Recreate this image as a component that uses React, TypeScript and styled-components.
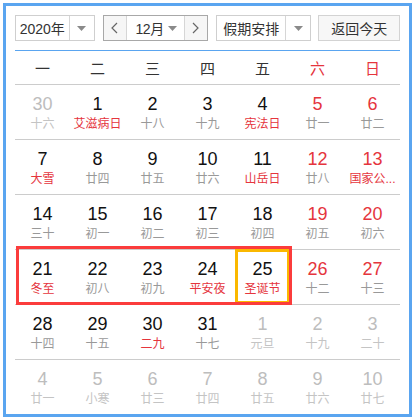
import styled, { createGlobalStyle } from "styled-components";

const GlobalStyle = createGlobalStyle`
  body {
    margin: 0;
    background: #fff;
    font-family: "Liberation Sans", "Noto Sans CJK SC", sans-serif;
  }
`;

type Day = {
  num: number;
  lunar: string;
  other?: boolean;
  festival?: boolean;
  weekend?: boolean;
  selected?: boolean;
};

const raw: [number, string, string?][][] = [
  [[30, "十六", "o"], [1, "艾滋病日", "f"], [2, "十八"], [3, "十九"], [4, "宪法日", "f"], [5, "廿一"], [6, "廿二"]],
  [[7, "大雪", "f"], [8, "廿四"], [9, "廿五"], [10, "廿六"], [11, "山岳日", "f"], [12, "廿八"], [13, "国家公...", "f"]],
  [[14, "三十"], [15, "初一"], [16, "初二"], [17, "初三"], [18, "初四"], [19, "初五"], [20, "初六"]],
  [[21, "冬至", "f"], [22, "初八"], [23, "初九"], [24, "平安夜", "f"], [25, "圣诞节", "fs"], [26, "十二"], [27, "十三"]],
  [[28, "十四"], [29, "十五"], [30, "二九", "f"], [31, "十七"], [1, "元旦", "o"], [2, "十九", "o"], [3, "二十", "o"]],
  [[4, "廿一", "o"], [5, "小寒", "o"], [6, "廿三", "o"], [7, "廿四", "o"], [8, "廿五", "o"], [9, "廿六", "o"], [10, "廿七", "o"]],
];

const weeks: Day[][] = raw.map((row) =>
  row.map(([num, lunar, flag = ""], i) => ({
    num,
    lunar,
    other: flag.includes("o"),
    festival: flag.includes("f"),
    selected: flag.includes("s"),
    weekend: i >= 5,
  }))
);

const weekdays = ["一", "二", "三", "四", "五", "六", "日"];

const Caret = () => (
  <svg width="9" height="5" viewBox="0 0 9 5">
    <path d="M0 0h9L4.5 5z" fill="#8a8a8a" />
  </svg>
);

const Chevron = ({ dir }: { dir: "left" | "right" }) => (
  <svg width="7" height="12" viewBox="0 0 7 12">
    <path
      d={dir === "left" ? "M6 1L1 6l5 5" : "M1 1l5 5-5 5"}
      fill="none"
      stroke="#666"
      strokeWidth="1.2"
    />
  </svg>
);

const App = (): JSX.Element => {
  return (
    <>
      <GlobalStyle />
      <Frame>
        <Toolbar>
          <Select $width={80}>
            <span className="label">2020年</span>
            <span className="arrow">
              <Caret />
            </span>
          </Select>
          <MonthGroup>
            <NavButton>
              <Chevron dir="left" />
            </NavButton>
            <MonthSelect>
              <span>12月</span>
              <Caret />
            </MonthSelect>
            <NavButton>
              <Chevron dir="right" />
            </NavButton>
          </MonthGroup>
          <Select $width={96}>
            <span className="label">假期安排</span>
            <span className="arrow">
              <Caret />
            </span>
          </Select>
          <TodayButton>返回今天</TodayButton>
        </Toolbar>

        <WeekHeader>
          {weekdays.map((w, i) => (
            <HeaderCell key={w} $weekend={i >= 5}>
              {w}
            </HeaderCell>
          ))}
        </WeekHeader>

        {weeks.map((week, wi) => (
          <WeekRow key={wi}>
            {wi === 3 && <WeekHighlight />}
            {week.map((d, di) => (
              <DayCell key={di} $selected={d.selected}>
                <DayNum $other={d.other} $weekend={d.weekend}>
                  {d.num}
                </DayNum>
                <Lunar $other={d.other} $festival={d.festival}>
                  {d.lunar}
                </Lunar>
              </DayCell>
            ))}
          </WeekRow>
        ))}
      </Frame>
    </>
  );
};

export default App;

const Frame = styled.div`
  margin: 3px;
  width: 409px;
  height: 414px;
  box-sizing: border-box;
  border: 3px solid #5aa5f0;
  padding: 9px 9px 0;
  background: #fff;
  overflow: hidden;
`;

const Toolbar = styled.div`
  display: flex;
  align-items: center;
  gap: 8px;
  height: 26px;
  font-size: 14px;
  color: #333;
  white-space: nowrap;
`;

const Select = styled.div<{ $width: number }>`
  width: ${(p) => p.$width}px;
  height: 26px;
  box-sizing: border-box;
  border: 1px solid #cfcfcf;
  display: flex;
  background: #fff;

  .label {
    flex: 1;
    display: flex;
    align-items: center;
    justify-content: center;
  }
  .arrow {
    width: 24px;
    border-left: 1px solid #d6d6d6;
    display: flex;
    align-items: center;
    justify-content: center;
  }
`;

const MonthGroup = styled.div`
  width: 106px;
  height: 26px;
  box-sizing: border-box;
  border: 1px solid #a8a8a8;
  display: flex;
`;

const NavButton = styled.div`
  width: 22px;
  background: #f6f6f6;
  display: flex;
  align-items: center;
  justify-content: center;
`;

const MonthSelect = styled.div`
  flex: 1;
  border-left: 1px solid #d6d6d6;
  border-right: 1px solid #d6d6d6;
  display: flex;
  align-items: center;
  justify-content: space-between;
  padding: 0 7px 0 9px;
  letter-spacing: -0.5px;
`;

const TodayButton = styled.div`
  margin-left: -1px;
  width: 82px;
  height: 26px;
  box-sizing: border-box;
  border: 1px solid #d3d3d3;
  background: #f7f7f7;
  display: flex;
  align-items: center;
  justify-content: center;
`;

const WeekHeader = styled.div`
  margin-top: 9px;
  display: grid;
  grid-template-columns: repeat(7, 55px);
  height: 33px;
  border-top: 1px solid #5aa5f0;
`;

const HeaderCell = styled.div<{ $weekend?: boolean }>`
  display: flex;
  align-items: center;
  justify-content: center;
  font-size: 15px;
  color: ${(p) => (p.$weekend ? "#e5353d" : "#333")};
`;

const WeekRow = styled.div`
  position: relative;
  display: grid;
  grid-template-columns: repeat(7, 55px);
  height: 55px;
  box-sizing: border-box;
  border-top: 1px solid #cccccc;
`;

const WeekHighlight = styled.div`
  position: absolute;
  left: 1px;
  top: -4px;
  width: 276px;
  height: 59px;
  box-sizing: border-box;
  border: 3px solid #fb3c3c;
  pointer-events: none;
  z-index: 2;
`;

const DayCell = styled.div<{ $selected?: boolean }>`
  position: relative;
  display: flex;
  flex-direction: column;
  align-items: center;
  padding-top: 8px;
  box-sizing: border-box;
  ${(p) =>
    p.$selected &&
    `
    margin-top: -1px;
    padding-top: 9px;
    box-shadow: inset 0 0 0 3px #fab800;
    z-index: 1;
  `}
`;

const DayNum = styled.div<{ $other?: boolean; $weekend?: boolean }>`
  font-size: 18px;
  line-height: 22px;
  color: ${(p) => (p.$other ? "#bdbdbd" : p.$weekend ? "#e5353d" : "#111")};
`;

const Lunar = styled.div<{ $other?: boolean; $festival?: boolean }>`
  margin-top: 1px;
  font-size: 12px;
  line-height: 16px;
  white-space: nowrap;
  color: ${(p) => (p.$festival ? "#e5353d" : p.$other ? "#c4c4c4" : "#999")};
`;
